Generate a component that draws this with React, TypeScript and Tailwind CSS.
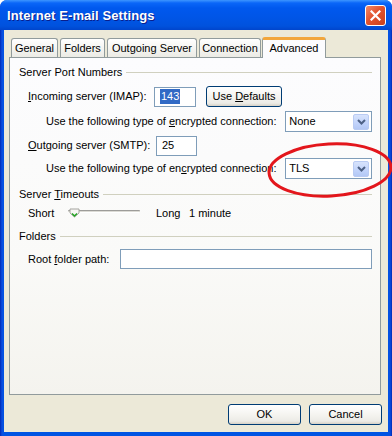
import React from "react";

const U = ({ children }: { children: React.ReactNode }) => <span className="underline underline-offset-[1px]">{children}</span>;

function Tab({ label, w, selected }: { label: React.ReactNode; w: number; selected?: boolean }) {
  if (selected) {
    return (
      <div
        className="relative z-10 -mb-px h-[21px] flex items-center justify-center rounded-t-[3px] border-x border-[#919B9C] bg-[#FCFCFE] border-t-[3px] border-t-[#F2A63C] -ml-[1px] -mr-[1px]"
        style={{ width: w }}
      >
        <span className="-mt-[2px]">{label}</span>
      </div>
    );
  }
  return (
    <div
      className="h-[19px] flex items-center justify-center rounded-t-[3px] border-x border-t border-[#919B9C] bg-[linear-gradient(to_bottom,#FFFFFF,#F3F3EF_60%,#ECEBE5)]"
      style={{ width: w }}
    >
      <span className="mt-[1px]">{label}</span>
    </div>
  );
}

function GroupHeader({ children }: { children: React.ReactNode }) {
  return (
    <div className="h-[14px] flex items-center">
      <span className="whitespace-nowrap">{children}</span>
      <div className="flex-1 ml-[4px] border-t border-[#D0D0BF]" />
    </div>
  );
}

function XPButton({ children, w }: { children: React.ReactNode; w: number }) {
  return (
    <div
      className="h-[21px] flex items-center justify-center rounded-[3px] border border-[#003C74] bg-[linear-gradient(to_bottom,#FFFFFF,#F5F4F0_50%,#ECEBE6_85%,#D6D0C5)]"
      style={{ width: w }}
    >
      {children}
    </div>
  );
}

function Select({ value }: { value: string }) {
  return (
    <div className="w-[87px] h-[21px] border border-[#7F9DB9] bg-white flex items-center pl-[3px] pr-[2px]">
      <span className="flex-1">{value}</span>
      <div className="w-[16px] h-[16px] rounded-[2px] border border-[#B9CBF3] bg-[linear-gradient(to_bottom,#D7E3FC,#C1D3FB_60%,#B3C8F5)] flex items-center justify-center">
        <svg width="9" height="6" viewBox="0 0 9 6">
          <path d="M1 1 L4.5 4.5 L8 1" fill="none" stroke="#4D6185" strokeWidth="2" />
        </svg>
      </div>
    </div>
  );
}

export default function App() {
  return (
    <div className="w-[392px] h-[436px] bg-white font-['Liberation_Sans','DejaVu_Sans',sans-serif] text-[11px] leading-none text-black relative overflow-hidden">
      <div className="w-[392px] h-[436px] flex flex-col rounded-t-[7px] bg-[linear-gradient(to_right,#0029B5,#0A4EE0_2px,#0054E3_4px,#0054E3_388px,#0A4EE0_390px,#0029B5)]">
        {/* Title bar */}
        <div className="h-[30px] flex items-center pl-[7px] pr-[6px] rounded-t-[7px] bg-[linear-gradient(to_bottom,#3D95FF_0px,#0A66F8_3px,#0058EE_8px,#0055E6_18px,#0052DD_26px,#0045CC_30px)]">
          <span className="text-white font-bold text-[13px] [text-shadow:1px_1px_0_#0A1E8C] tracking-[0.1px]">Internet E-mail Settings</span>
          <div className="ml-auto w-[21px] h-[21px] rounded-[3px] border border-white bg-[linear-gradient(135deg,#F08A6A,#E2532F_45%,#C8401C)] flex items-center justify-center">
            <svg width="11" height="11" viewBox="0 0 11 11">
              <path d="M1.5 1.5 L9.5 9.5 M9.5 1.5 L1.5 9.5" stroke="white" strokeWidth="2.2" strokeLinecap="square" />
            </svg>
          </div>
        </div>
        {/* Body */}
        <div className="flex-1 mx-[4px] mb-[4px] bg-[#ECE9D8] flex flex-col pl-[5px] pr-[7px] pt-[6px]">
          {/* Tabs */}
          <div className="flex items-end pl-[2px] gap-[2px] h-[21px]">
            <Tab label="General" w={47} />
            <Tab label="Folders" w={45} />
            <Tab label="Outgoing Server" w={90} />
            <Tab label="Connection" w={62} />
            <Tab label="Advanced" w={64} selected />
          </div>
          {/* Panel */}
          <div className="h-[338px] border border-[#919B9C] bg-[linear-gradient(to_bottom,#FCFCFE,#FAFAF8_60%,#F4F3EE)] pl-[9px] pr-[8px] pt-[7px] flex flex-col">
            <GroupHeader>Server Port Numbers</GroupHeader>
            <div className="mt-[7px] h-[21px] flex items-center pl-[9px]">
              <span className="w-[126px]"><U>I</U>ncoming server (IMAP):</span>
              <div className="w-[42px] h-[20px] border border-[#7F9DB9] bg-white flex items-center pl-[5px]">
                <span className="bg-[#316AC5] text-white px-[1px] py-[2px]">143</span>
              </div>
              <div className="ml-[10px]">
                <XPButton w={76}>
                  <span>Use <U>D</U>efaults</span>
                </XPButton>
              </div>
            </div>
            <div className="mt-[4px] h-[21px] flex items-center pl-[27px]">
              <span className="w-[240px]">Use the following type of <U>e</U>ncrypted connection:</span>
              <Select value="None" />
            </div>
            <div className="mt-[3px] h-[21px] flex items-center pl-[9px]">
              <span className="w-[128px]"><U>O</U>utgoing server (SMTP):</span>
              <div className="w-[41px] h-[20px] border border-[#7F9DB9] bg-white flex items-center pl-[5px]">
                <span>25</span>
              </div>
            </div>
            <div className="mt-[2px] h-[21px] flex items-center pl-[27px]">
              <span className="w-[240px]">Use the following type of en<U>c</U>rypted connection:</span>
              <Select value="TLS" />
            </div>
            <div className="mt-[8px]">
              <GroupHeader>Server <U>T</U>imeouts</GroupHeader>
            </div>
            <div className="mt-[4px] h-[16px] flex items-center pl-[9px]">
              <span className="w-[40px]">Short</span>
              <div className="relative w-[72px] h-[16px]">
                <div className="absolute left-0 right-0 top-[5px] h-[3px] rounded-[1px] border-t border-[#9D9C99] border-b border-b-white bg-[#DCDBD5]" />
                <svg className="absolute left-[1px] top-[3px]" width="11" height="10" viewBox="0 0 11 10">
                  <path d="M1 1 H10 V5 L5.5 9 L1 5 Z" fill="#F7F7F4" stroke="#A5A49F" strokeWidth="1" />
                  <path d="M3 5.5 L5.5 8 L8 5.5" fill="none" stroke="#21A121" strokeWidth="1.5" />
                </svg>
              </div>
              <span className="ml-[16px] w-[33px]">Long</span>
              <span>1 minute</span>
            </div>
            <div className="mt-[8px]">
              <GroupHeader>Folders</GroupHeader>
            </div>
            <div className="mt-[6px] h-[20px] flex items-center pl-[9px]">
              <span className="w-[92px]">Root <U>f</U>older path:</span>
              <div className="w-[253px] h-[20px] border border-[#7F9DB9] bg-white" />
            </div>
          </div>
          {/* Buttons */}
          <div className="mt-[9px] flex justify-end gap-[8px] -mr-[1px]">
            <XPButton w={73}>OK</XPButton>
            <XPButton w={73}>Cancel</XPButton>
          </div>
        </div>
      </div>
      {/* Red annotation ellipse */}
      <svg className="absolute left-0 top-0 pointer-events-none" width="392" height="436" viewBox="0 0 392 436">
        <ellipse cx="330" cy="170" rx="61" ry="26" fill="none" stroke="#E3161C" strokeWidth="3" transform="rotate(-3 330 170)" />
      </svg>
    </div>
  );
}
